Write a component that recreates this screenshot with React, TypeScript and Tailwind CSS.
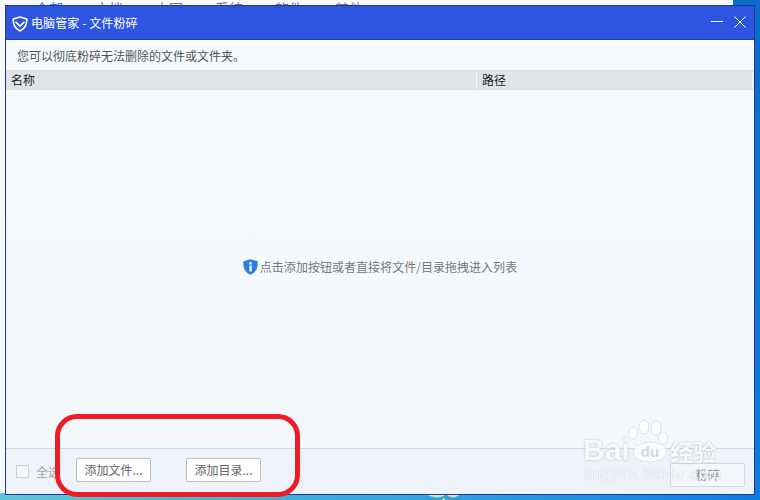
const cjk = { fontFamily: '"Noto Sans CJK SC", "Liberation Sans", sans-serif' };
const latin = { fontFamily: '"Liberation Sans", sans-serif' };

function Shield() {
  return (
    <svg width="16" height="16" viewBox="0 0 16 16" fill="none" className="shrink-0 mt-[3px]">
      <path d="M8 1 L14.8 3 C15 8 13.8 12 8 15 C2.2 12 1 8 1.2 3 Z" stroke="white" strokeWidth="1.6" strokeLinejoin="round" />
      <path d="M3.6 5.8 L8 10 L12.4 5.8" stroke="white" strokeWidth="1.7" />
    </svg>
  );
}

function InfoShield() {
  return (
    <svg width="15" height="16" viewBox="0 0 15 16" className="shrink-0">
      <path d="M7.5 .3 L14.6 2.2 C15 8 14 12.8 7.5 15.8 C1 12.8 0 8 .4 2.2 Z" fill="#2b7de0" />
      <rect x="6.4" y="3.2" width="2.3" height="2.3" fill="white" />
      <rect x="6.4" y="6.6" width="2.3" height="5.8" fill="white" />
    </svg>
  );
}

function Watermark() {
  return (
    <div className="absolute left-[583px] top-[418px] w-[136px] h-[66px] pointer-events-none text-white/90" style={latin}>
      <svg width="136" height="46" viewBox="0 0 136 46" className="absolute left-0 top-0">
        <g fill="#ffffff" fillOpacity="0.85" stroke="#c9d0d6" strokeOpacity="0.8" strokeWidth="0.8">
          <ellipse cx="50" cy="15" rx="4.5" ry="6" />
          <ellipse cx="61" cy="9" rx="5" ry="7" />
          <ellipse cx="73" cy="10" rx="5" ry="7" />
          <ellipse cx="80" cy="20" rx="4.5" ry="6" />
          <ellipse cx="67" cy="34" rx="17" ry="10" />
        </g>
      </svg>
      <div className="absolute left-0 top-[17px] text-[30px] leading-[30px] font-bold [text-shadow:0_0_2px_#a9b3bb]">Bai</div>
      <div className="absolute left-[57px] top-[24px] w-[20px] text-center text-[15px] leading-[20px] font-bold text-[#d2d8de]">du</div>
      <div className="absolute left-[87px] top-[20px] text-[23px] leading-[26px] font-bold [text-shadow:0_0_2px_#a9b3bb]" style={cjk}>经验</div>
      <div className="absolute left-[1px] top-[47px] text-[15px] leading-[18px] tracking-[1px] whitespace-nowrap [text-shadow:0_0_1px_#a9b3bb]">jingyan.baidu.com</div>
    </div>
  );
}

export default function App() {
  return (
    <div className="relative w-[760px] h-[500px] overflow-hidden bg-[#f7fbff] flex flex-col" style={cjk}>
      <div className="h-[5px] shrink-0 overflow-hidden flex">
        <div className="w-[733px] overflow-hidden">
          <div className="flex gap-[32px] pl-[35px] pt-[1px] text-[14px] leading-[14px] text-[#777]">
            <span className="text-[#2c7be8]">全部</span>
            <span>文档</span>
            <span>内网</span>
            <span>系统</span>
            <span>软件</span>
            <span>其他</span>
          </div>
        </div>
        <div className="flex-1 bg-[#0a6cc4]" />
      </div>
      <div className="flex-1 flex min-h-0">
        <div className="w-[5px] shrink-0 bg-[linear-gradient(to_bottom,#f7fbff_488px,#5ec6d8_488px)]" />
        <div className="flex-1 min-w-0 flex flex-col bg-[linear-gradient(to_bottom,#f5fafe,#f3f8fd)] border border-[#23349b]">
          <div className="h-[34px] shrink-0 bg-[#2e55e0] border-b border-[#24409f] flex items-center pl-[6px] pr-[8px]">
            <Shield />
            <span className="ml-[3px] text-white text-[12px] leading-[16px] tracking-[0.1px]">电脑管家 - 文件粉碎</span>
            <svg width="35" height="14" viewBox="0 0 35 14" className="ml-auto" fill="none" stroke="white" strokeWidth="1">
              <path d="M0 5.5 H12" />
              <path d="M23.5 .5 L34.5 11.5 M34.5 .5 L23.5 11.5" />
            </svg>
          </div>
          <div className="h-[30px] shrink-0 flex items-center pl-[11px] pt-px text-[12px] text-[#555]">
            您可以彻底粉碎无法删除的文件或文件夹。
          </div>
          <div className="h-[20px] shrink-0 bg-[#e0e4e8] flex text-[12px] text-[#1c1c1c] leading-[20px]">
            <div className="w-[471px] pl-[5px] flex items-center justify-between">
              <span>名称</span>
              <span className="w-px h-[17px] bg-[#f5f7f9]" />
            </div>
            <div className="flex-1 pl-[5px] pr-[1px] flex items-center justify-between">
              <span>路径</span>
              <span className="w-px h-[17px] bg-[#f5f7f9]" />
            </div>
          </div>
          <div className="flex-1 flex items-center justify-center pb-[4px] min-h-0">
            <div className="flex items-center gap-[2px] text-[12px] text-[#777]">
              <InfoShield />
              <span className="tracking-[0.03px]">点击添加按钮或者直接将文件/目录拖拽进入列表</span>
            </div>
          </div>
          <div className="h-[46px] shrink-0 bg-[#eef3fa] border-t border-[#cddbe4] flex items-center pl-[10px] pr-[9px]">
            <span className="w-[13px] h-[13px] border border-[#cfd4d8] bg-[#f4f7fb]" />
            <span className="ml-[7px] w-[40px] text-[12px] text-[#a5a5a5]">全选</span>
            <button className="w-[75px] h-[24px] mb-[4px] bg-white border border-[#bfbfbf] rounded-[2px] text-[12px] text-[#666]">添加文件...</button>
            <button className="w-[75px] h-[24px] mb-[4px] ml-[35px] bg-white border border-[#bfbfbf] rounded-[2px] text-[12px] text-[#666]">添加目录...</button>
            <button className="ml-auto w-[75px] h-[24px] mt-[6px] bg-[#f4f7fb] border border-[#d5d9de] rounded-[2px] text-[12px] text-[#888]">粉碎</button>
          </div>
        </div>
        <div className="w-[5px] shrink-0 bg-[linear-gradient(to_bottom,#0a6cc4,#0a7ee0)]" />
      </div>
      <div className="h-[5px] shrink-0 flex bg-[linear-gradient(to_right,#5ec6d8,#35a9e0_50%,#0a7ee0)]">
        <svg width="32" height="5" viewBox="0 0 32 5" className="ml-[428px]">
          <path d="M0 0 H17 C14 3 5 3.5 0 0 Z" fill="#e6dfb4" />
          <path d="M19 0 H31 C28 3 22 3.5 19 0 Z" fill="#e6dfb4" />
          <path d="M14 5 L15.5 3 L17 5 Z" fill="#f2f7e6" />
        </svg>
      </div>
      <Watermark />
      <div className="absolute left-[55px] top-[414px] w-[245px] h-[83px] border-[5px] border-[#ee1c25] rounded-[22px] pointer-events-none" />
    </div>
  );
}
